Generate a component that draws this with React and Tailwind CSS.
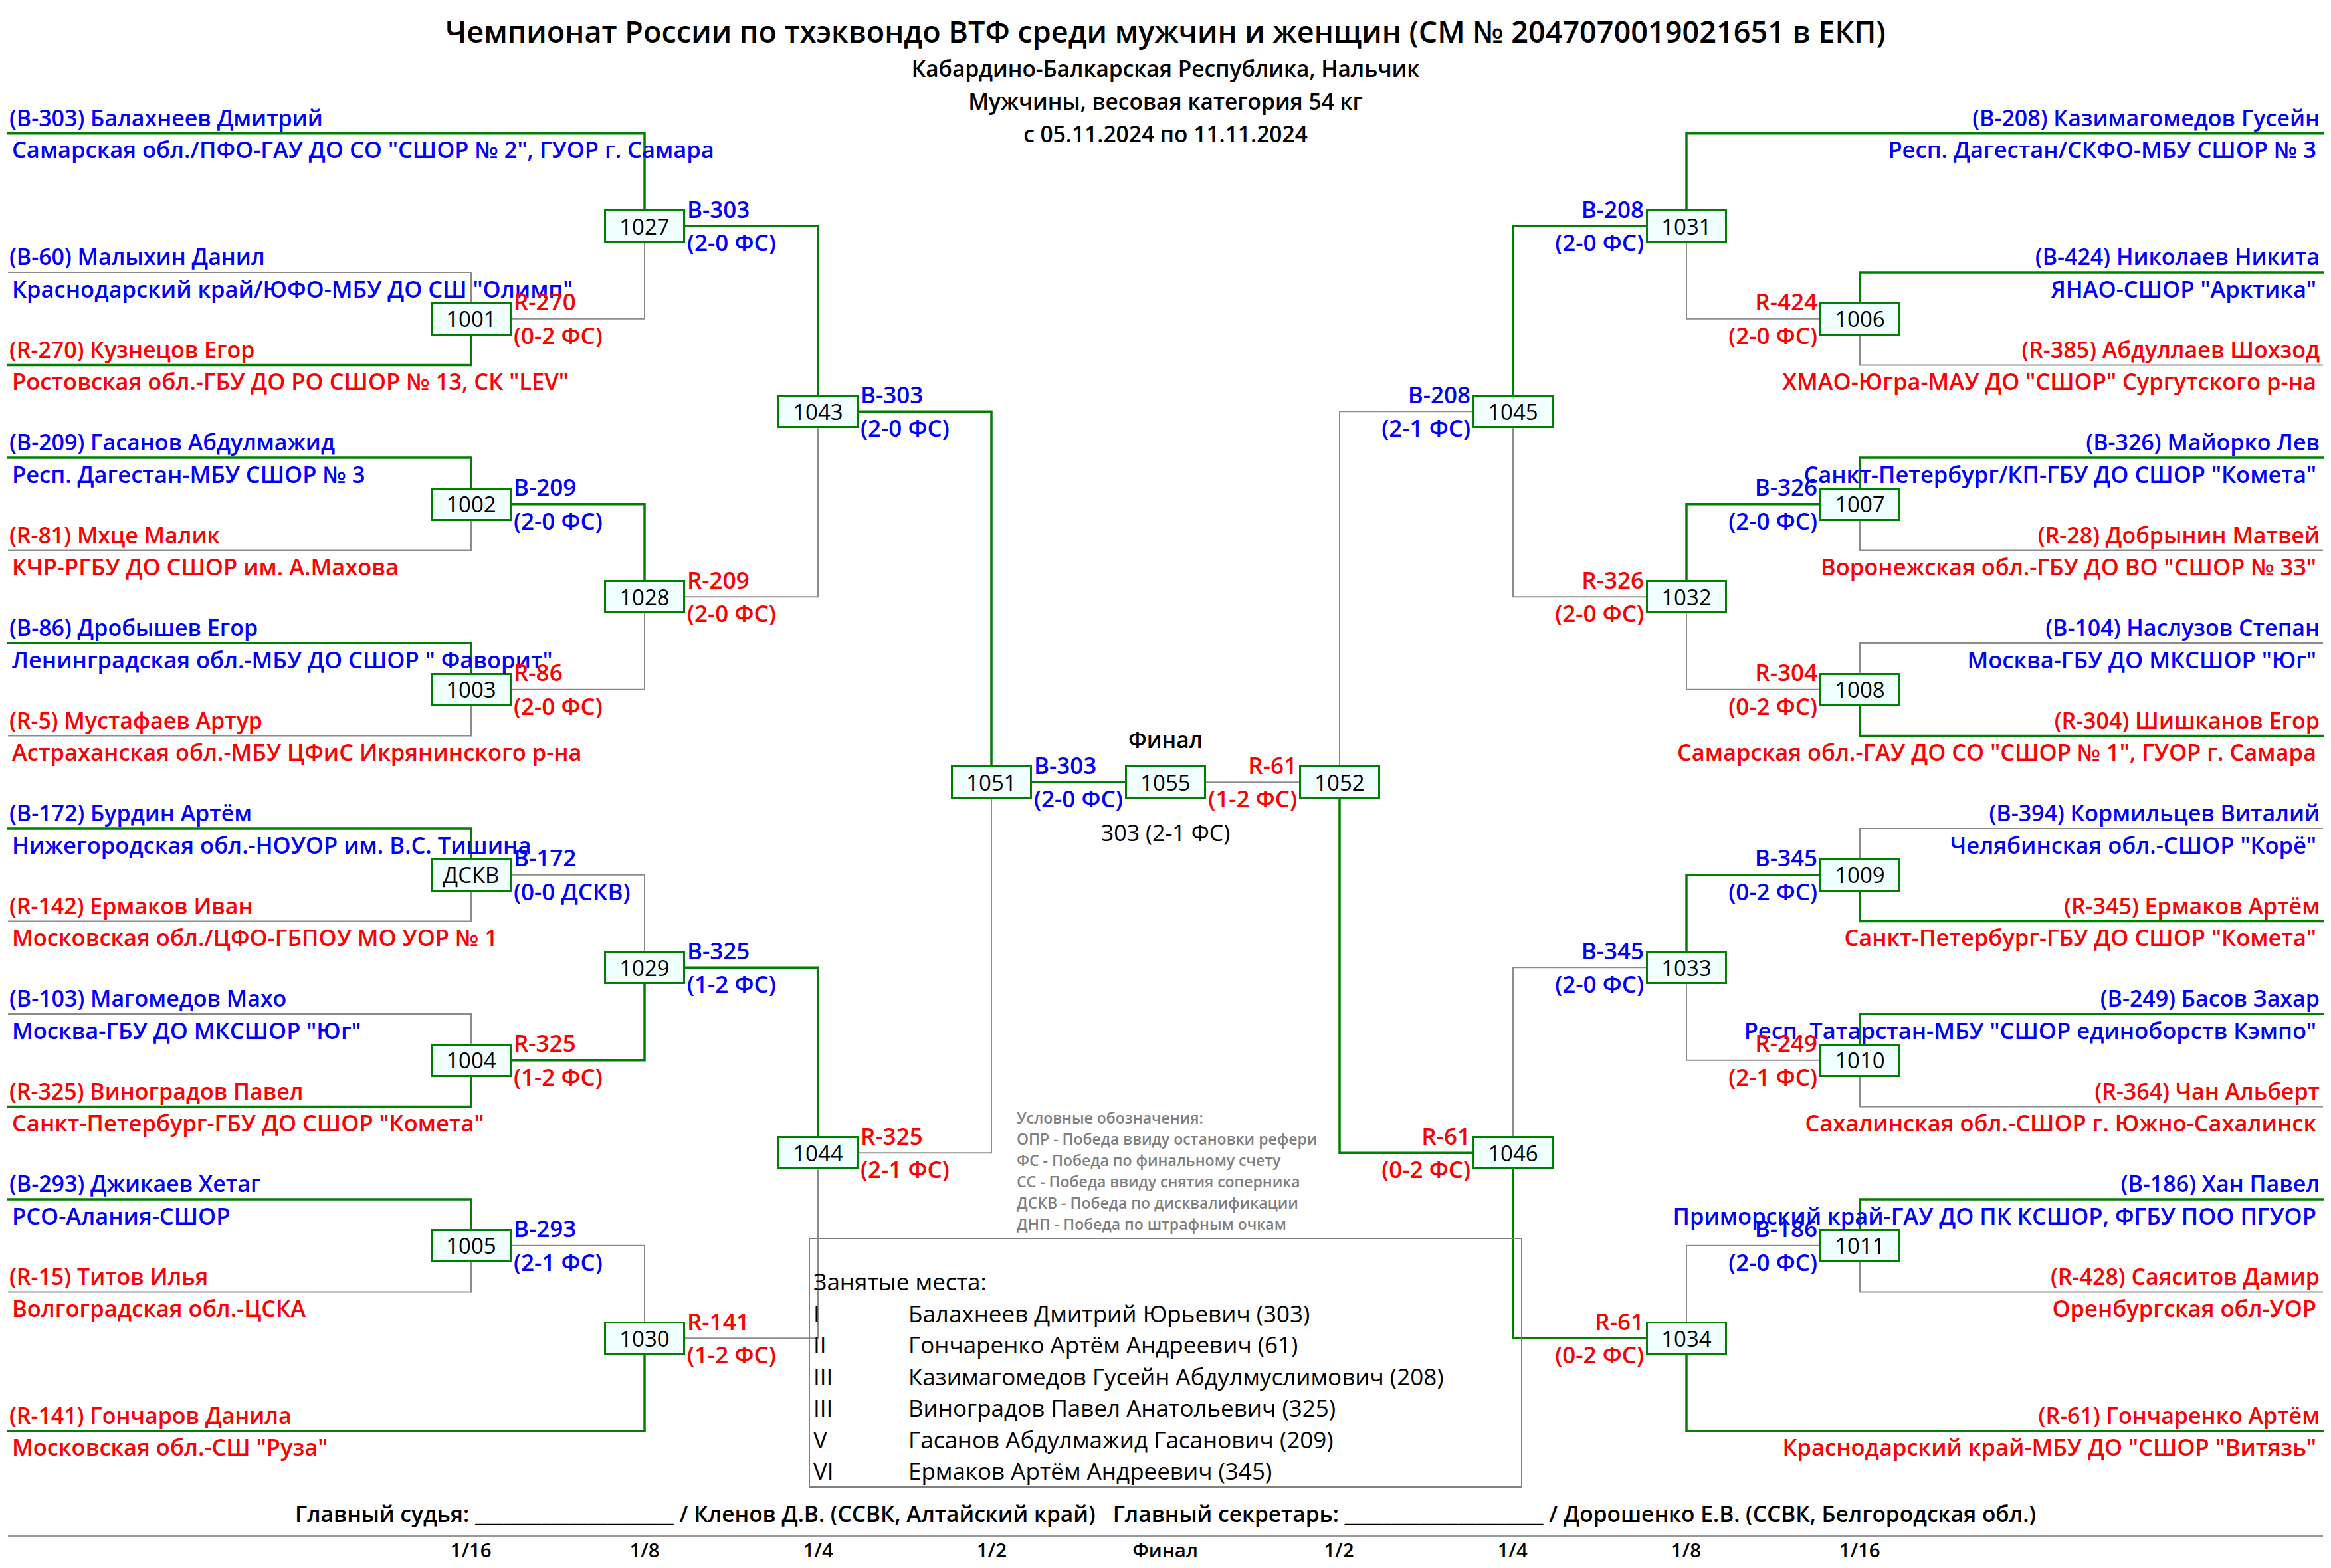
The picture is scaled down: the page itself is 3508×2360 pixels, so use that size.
import React from "react";

const W = 3508;
const Y = (k) => 131 + 139.5 * k;
const R16 = (j) => 200.75 + 279 * j;
const R8 = (m) => 340.25 + 558 * m;
const R4 = (q) => 619.25 + 1116 * q;
const SF = 1177.25;
const CF = 1754;
const COLS_L = [709, 970, 1231, 1492];
const COLS_R = [2799, 2538, 2277, 2016];
const HW = 61;
const HH = 25;
const GREEN = "#008000";
const GRAY = "#8c8c8c";

const LEFT = {
  byeTop: { n: "(B-303) Балахнеев Дмитрий", c: 'Самарская обл./ПФО-ГАУ ДО СО "СШОР № 2", ГУОР г. Самара', col: "B" },
  byeBot: { n: "(R-141) Гончаров Данила", c: 'Московская обл.-СШ "Руза"', col: "R" },
  pairs: [
    [{ n: "(B-60) Малыхин Данил", c: 'Краснодарский край/ЮФО-МБУ ДО СШ "Олимп"', w: false }, { n: "(R-270) Кузнецов Егор", c: 'Ростовская обл.-ГБУ ДО РО СШОР № 13, СК "LEV"', w: true }],
    [{ n: "(B-209) Гасанов Абдулмажид", c: "Респ. Дагестан-МБУ СШОР № 3", w: true }, { n: "(R-81) Мхце Малик", c: "КЧР-РГБУ ДО СШОР им. А.Махова", w: false }],
    [{ n: "(B-86) Дробышев Егор", c: 'Ленинградская обл.-МБУ ДО СШОР " Фаворит"', w: true }, { n: "(R-5) Мустафаев Артур", c: "Астраханская обл.-МБУ ЦФиС Икрянинского р-на", w: false }],
    [{ n: "(B-172) Бурдин Артём", c: "Нижегородская обл.-НОУОР им. В.С. Тишина", w: true }, { n: "(R-142) Ермаков Иван", c: "Московская обл./ЦФО-ГБПОУ МО УОР № 1", w: false }],
    [{ n: "(B-103) Магомедов Махо", c: 'Москва-ГБУ ДО МКСШОР "Юг"', w: false }, { n: "(R-325) Виноградов Павел", c: 'Санкт-Петербург-ГБУ ДО СШОР "Комета"', w: true }],
    [{ n: "(B-293) Джикаев Хетаг", c: "РСО-Алания-СШОР", w: true }, { n: "(R-15) Титов Илья", c: "Волгоградская обл.-ЦСКА", w: false }],
  ],
  r16: [
    { id: "1001", l: "R-270", s: "(0-2 ФС)", w: false },
    { id: "1002", l: "B-209", s: "(2-0 ФС)", w: true },
    { id: "1003", l: "R-86", s: "(2-0 ФС)", w: false },
    { id: "ДСКВ", l: "B-172", s: "(0-0 ДСКВ)", w: false },
    { id: "1004", l: "R-325", s: "(1-2 ФС)", w: true },
    { id: "1005", l: "B-293", s: "(2-1 ФС)", w: false },
  ],
  r8: [
    { id: "1027", l: "B-303", s: "(2-0 ФС)", w: true },
    { id: "1028", l: "R-209", s: "(2-0 ФС)", w: false },
    { id: "1029", l: "B-325", s: "(1-2 ФС)", w: true },
    { id: "1030", l: "R-141", s: "(1-2 ФС)", w: false },
  ],
  r4: [
    { id: "1043", l: "B-303", s: "(2-0 ФС)", w: true },
    { id: "1044", l: "R-325", s: "(2-1 ФС)", w: false },
  ],
  sf: { id: "1051", l: "B-303", s: "(2-0 ФС)", w: true },
};

const RIGHT = {
  byeTop: { n: "(B-208) Казимагомедов Гусейн", c: "Респ. Дагестан/СКФО-МБУ СШОР № 3", col: "B" },
  byeBot: { n: "(R-61) Гончаренко Артём", c: 'Краснодарский край-МБУ ДО "СШОР "Витязь"', col: "R" },
  pairs: [
    [{ n: "(B-424) Николаев Никита", c: 'ЯНАО-СШОР "Арктика"', w: true }, { n: "(R-385) Абдуллаев Шохзод", c: 'ХМАО-Югра-МАУ ДО "СШОР" Сургутского р-на', w: false }],
    [{ n: "(B-326) Майорко Лев", c: 'Санкт-Петербург/КП-ГБУ ДО СШОР "Комета"', w: true }, { n: "(R-28) Добрынин Матвей", c: 'Воронежская обл.-ГБУ ДО ВО "СШОР № 33"', w: false }],
    [{ n: "(B-104) Наслузов Степан", c: 'Москва-ГБУ ДО МКСШОР "Юг"', w: false }, { n: "(R-304) Шишканов Егор", c: 'Самарская обл.-ГАУ ДО СО "СШОР № 1", ГУОР г. Самара', w: true }],
    [{ n: "(B-394) Кормильцев Виталий", c: 'Челябинская обл.-СШОР "Корё"', w: false }, { n: "(R-345) Ермаков Артём", c: 'Санкт-Петербург-ГБУ ДО СШОР "Комета"', w: true }],
    [{ n: "(B-249) Басов Захар", c: 'Респ. Татарстан-МБУ "СШОР единоборств Кэмпо"', w: true }, { n: "(R-364) Чан Альберт", c: "Сахалинская обл.-СШОР г. Южно-Сахалинск", w: false }],
    [{ n: "(B-186) Хан Павел", c: "Приморский край-ГАУ ДО ПК КСШОР, ФГБУ ПОО ПГУОР", w: true }, { n: "(R-428) Саяситов Дамир", c: "Оренбургская обл-УОР", w: false }],
  ],
  r16: [
    { id: "1006", l: "R-424", s: "(2-0 ФС)", w: false },
    { id: "1007", l: "B-326", s: "(2-0 ФС)", w: true },
    { id: "1008", l: "R-304", s: "(0-2 ФС)", w: false },
    { id: "1009", l: "B-345", s: "(0-2 ФС)", w: true },
    { id: "1010", l: "R-249", s: "(2-1 ФС)", w: false },
    { id: "1011", l: "B-186", s: "(2-0 ФС)", w: false },
  ],
  r8: [
    { id: "1031", l: "B-208", s: "(2-0 ФС)", w: true },
    { id: "1032", l: "R-326", s: "(2-0 ФС)", w: false },
    { id: "1033", l: "B-345", s: "(2-0 ФС)", w: false },
    { id: "1034", l: "R-61", s: "(0-2 ФС)", w: true },
  ],
  r4: [
    { id: "1045", l: "B-208", s: "(2-1 ФС)", w: false },
    { id: "1046", l: "R-61", s: "(0-2 ФС)", w: true },
  ],
  sf: { id: "1052", l: "R-61", s: "(1-2 ФС)", w: false },
};

const colorOf = (t) => (t.trim().startsWith("(B") || t.trim().startsWith("B") ? "blue" : "red");

const SIZE = {
  name: "text-[34px]",
  club: "text-[34.5px]",
  label: "text-[35px]",
  final: "text-[33.5px]",
  result: "text-[34px]",
};

function Txt({ x, y, anchor = "left", color = "black", weight = "semi", size = "name", children }) {
  const style =
    anchor === "left"
      ? { left: x, top: y - 21 }
      : anchor === "right"
      ? { right: W - x, top: y - 21 }
      : { left: x, top: y - 21, transform: "translateX(-50%)" };
  const cls = [
    "absolute whitespace-nowrap h-[40px] leading-[40px]",
    SIZE[size],
    weight === "semi" ? "font-semibold" : "font-normal",
    color === "blue" ? "text-[#0000ff]" : color === "red" ? "text-[#ff0000]" : "text-black",
  ].join(" ");
  return (
    <div className={cls} style={style}>
      {children}
    </div>
  );
}

function Box({ x, y, id }) {
  return (
    <div
      className="absolute w-[122px] h-[50px] border-[3px] border-[#008000] bg-[#f0ffff] flex items-center justify-center text-[33px] leading-none font-medium text-black"
      style={{ left: x - HW, top: y - HH }}
    >
      {id}
    </div>
  );
}

function buildSide(data, left) {
  const cols = left ? COLS_L : COLS_R;
  const dir = left ? 1 : -1;
  const edge = left ? 12 : 3496;
  const paths = [];
  const boxes = [];
  const texts = [];
  const toEdge = (yc, yp) => (yc < yp ? yp - HH : yp + HH);

  const namePos = (lineY, p, col, key) => {
    const color = col === "B" ? "blue" : "red";
    if (left) {
      texts.push(<Txt key={key + "n"} x={14} y={lineY - 23} color={color} size="name">{p.n}</Txt>);
      texts.push(<Txt key={key + "c"} x={18} y={lineY + 25.5} color={color} size="club">{p.c}</Txt>);
    } else {
      texts.push(<Txt key={key + "n"} x={3491} y={lineY - 23} anchor="right" color={color} size="name">{p.n}</Txt>);
      texts.push(<Txt key={key + "c"} x={3486} y={lineY + 25.5} anchor="right" color={color} size="club">{p.c}</Txt>);
    }
  };

  const label = (cx, cy, m, key) => {
    const color = colorOf(m.l);
    if (left) {
      texts.push(<Txt key={key + "l"} x={cx + HW + 3} y={cy - 24.5} color={color} size="label">{m.l}</Txt>);
      texts.push(<Txt key={key + "s"} x={cx + HW + 3} y={cy + 26} color={color} size="label">{m.s}</Txt>);
    } else {
      texts.push(<Txt key={key + "l"} x={cx - HW - 3} y={cy - 24.5} anchor="right" color={color} size="label">{m.l}</Txt>);
      texts.push(<Txt key={key + "s"} x={cx - HW - 3} y={cy + 26} anchor="right" color={color} size="label">{m.s}</Txt>);
    }
  };

  paths.push({ d: `M ${edge} ${R16(0)} H ${cols[1]} V ${R8(0) - HH}`, w: true });
  paths.push({ d: `M ${edge} ${R16(7)} H ${cols[1]} V ${R8(3) + HH}`, w: true });
  namePos(R16(0), data.byeTop, data.byeTop.col, "bt");
  namePos(R16(7), data.byeBot, data.byeBot.col, "bb");

  data.pairs.forEach((pair, i) => {
    const j = i + 1;
    const yc = R16(j);
    const yt = Y(2 * j);
    const yb = Y(2 * j + 1);
    paths.push({ d: `M ${edge} ${yt} H ${cols[0]} V ${yc - HH}`, w: pair[0].w });
    paths.push({ d: `M ${edge} ${yb} H ${cols[0]} V ${yc + HH}`, w: pair[1].w });
    namePos(yt, pair[0], "B", "p" + j + "t");
    namePos(yb, pair[1], "R", "p" + j + "b");
    const m = data.r16[i];
    const yp = R8(Math.floor(j / 2));
    paths.push({ d: `M ${cols[0] + dir * HW} ${yc} H ${cols[1]} V ${toEdge(yc, yp)}`, w: m.w });
    boxes.push(<Box key={"b16" + j} x={cols[0]} y={yc} id={m.id} />);
    label(cols[0], yc, m, "l16" + j);
  });

  data.r8.forEach((m, i) => {
    const yc = R8(i);
    const yp = R4(Math.floor(i / 2));
    paths.push({ d: `M ${cols[1] + dir * HW} ${yc} H ${cols[2]} V ${toEdge(yc, yp)}`, w: m.w });
    boxes.push(<Box key={"b8" + i} x={cols[1]} y={yc} id={m.id} />);
    label(cols[1], yc, m, "l8" + i);
  });

  data.r4.forEach((m, i) => {
    const yc = R4(i);
    paths.push({ d: `M ${cols[2] + dir * HW} ${yc} H ${cols[3]} V ${toEdge(yc, SF)}`, w: m.w });
    boxes.push(<Box key={"b4" + i} x={cols[2]} y={yc} id={m.id} />);
    label(cols[2], yc, m, "l4" + i);
  });

  paths.push({ d: `M ${cols[3] + dir * HW} ${SF} H ${CF - dir * HW}`, w: data.sf.w });
  boxes.push(<Box key="bsf" x={cols[3]} y={SF} id={data.sf.id} />);
  label(cols[3], SF, data.sf, "lsf");

  return { paths, boxes, texts };
}

function Bracket() {
  const L = buildSide(LEFT, true);
  const R = buildSide(RIGHT, false);
  const paths = [...L.paths, ...R.paths];
  return (
    <div className="absolute inset-0">
      <svg width="3508" height="2360" viewBox="0 0 3508 2360" className="absolute left-0 top-0">
        {paths
          .filter((p) => !p.w)
          .map((p, i) => (
            <path key={"g" + i} d={p.d} fill="none" stroke={GRAY} strokeWidth="2" />
          ))}
        {paths
          .filter((p) => p.w)
          .map((p, i) => (
            <path key={"w" + i} d={p.d} fill="none" stroke={GREEN} strokeWidth="3.5" strokeLinecap="square" />
          ))}
      </svg>
      {L.boxes}
      {R.boxes}
      <Box x={CF} y={SF} id="1055" />
      {L.texts}
      {R.texts}
      <Txt x={CF} y={1114} anchor="center" size="final">Финал</Txt>
      <Txt x={CF} y={1254} anchor="center" weight="normal" size="result">303 (2-1 ФС)</Txt>
    </div>
  );
}

const PLACES = [
  ["I", "Балахнеев Дмитрий Юрьевич (303)"],
  ["II", "Гончаренко Артём Андреевич (61)"],
  ["III", "Казимагомедов Гусейн Абдулмуслимович (208)"],
  ["III", "Виноградов Павел Анатольевич (325)"],
  ["V", "Гасанов Абдулмажид Гасанович (209)"],
  ["VI", "Ермаков Артём Андреевич (345)"],
];

const LEGEND = [
  "Условные обозначения:",
  "ОПР - Победа ввиду остановки рефери",
  "ФС - Победа по финальному счету",
  "СС - Победа ввиду снятия соперника",
  "ДСКВ - Победа по дисквалификации",
  "ДНП - Победа по штрафным очкам",
];

const ROUNDS = ["1/16", "1/8", "1/4", "1/2", "Финал", "1/2", "1/4", "1/8", "1/16"];

export default function App() {
  return (
    <div className="relative w-[3508px] h-[2360px] bg-white overflow-hidden flex flex-col font-['Open_Sans','Noto_Sans',sans-serif] text-black">
      <Bracket />
      <header className="relative flex flex-col items-center pt-[18px]">
        <h1 className="text-[45px] leading-[58px] font-semibold whitespace-nowrap">
          Чемпионат России по тхэквондо ВТФ среди мужчин и женщин (СМ № 2047070019021651 в ЕКП)
        </h1>
        <div className="mt-[3px] flex flex-col items-center text-[33.5px] leading-[49px] font-semibold">
          <div>Кабардино-Балкарская Республика, Нальчик</div>
          <div>Мужчины, весовая категория 54 кг</div>
          <div>с 05.11.2024 по 11.11.2024</div>
        </div>
      </header>
      <div className="flex-1" />
      <section className="relative mx-auto w-[1074px] flex flex-col">
        <div className="ml-[313px] flex flex-col text-[23px] leading-[32px] font-semibold text-[#808080]">
          {LEGEND.map((t) => (
            <div key={t}>{t}</div>
          ))}
        </div>
        <div className="mt-[5px] h-[376px] border-2 border-[#808080] pt-[40px] pl-[5px] flex flex-col text-[35px] leading-[47.5px] font-medium">
          <div>Занятые места:</div>
          {PLACES.map(([r, n], i) => (
            <div key={i} className="flex">
              <span className="w-[143px]">{r}</span>
              <span>{n}</span>
            </div>
          ))}
        </div>
      </section>
      <footer className="relative flex flex-col">
        <div className="mt-[19px] text-center text-[33.5px] leading-[40px] font-semibold whitespace-pre">
          {"Главный судья: _____________________ / Кленов Д.В. (ССВК, Алтайский край)   Главный секретарь: _____________________ / Дорошенко Е.В. (ССВК, Белгородская обл.)"}
        </div>
        <div className="mt-[13px] mx-[12px] h-[2px] bg-[#999999]" />
        <div className="flex pl-[578px] pb-[7px] text-[29.5px] leading-[40px] font-semibold">
          {ROUNDS.map((r, i) => (
            <div key={i} className="w-[261.25px] text-center">
              {r}
            </div>
          ))}
        </div>
      </footer>
    </div>
  );
}
